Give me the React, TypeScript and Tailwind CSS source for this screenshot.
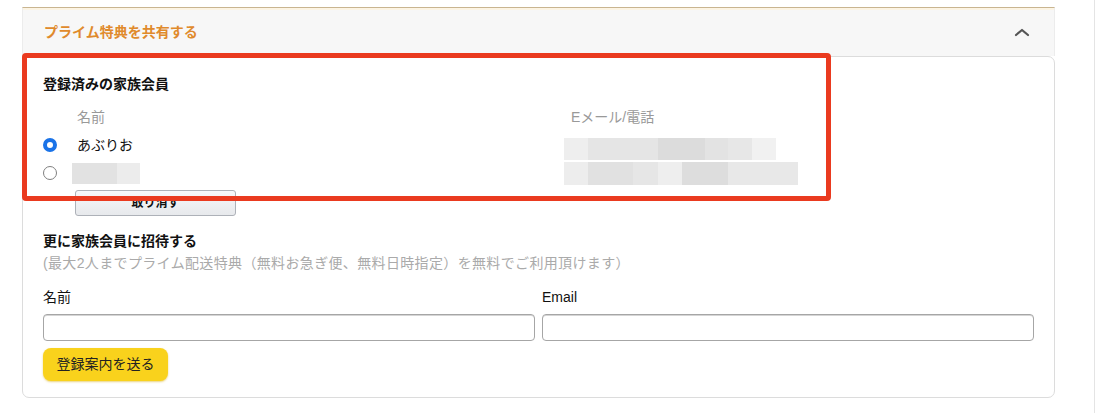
import React from "react";

const font = { fontFamily: '"Liberation Sans", "Noto Sans CJK JP", sans-serif' };

function Blocks({ segs, h }: { segs: [number, string][]; h: number }) {
  return (
    <div className="flex" style={{ height: h }}>
      {segs.map(([w, c], i) => (
        <div key={i} style={{ width: w, background: c }} />
      ))}
    </div>
  );
}

export default function App() {
  return (
    <div className="relative w-[1100px] h-[413px] bg-white flex overflow-hidden" style={font}>
      <div className="w-[1094px] pt-[7px] pl-[22px] pr-[39px]">
        <div className="h-[49px] border-t border-[#c9b590] bg-[#f7f7f7] shadow-[inset_0_2px_0_#fcf4e4] flex items-center justify-between pl-[21px] pr-[24px] border-x border-x-[#ececec]">
          <span className="text-[14px] font-bold text-[#e08a2c] leading-[20px]">プライム特典を共有する</span>
          <svg width="16" height="10" viewBox="0 0 16 10">
            <polyline points="2,8 8,3 14,8" fill="none" stroke="#555" strokeWidth="2.2" strokeLinecap="round" strokeLinejoin="round" />
          </svg>
        </div>
        <div className="border border-[#dcdcdc] rounded-[7px] px-[20px] pt-[17px] pb-[16px] text-[#111]">
          <div className="text-[14px] font-bold leading-[20px]">登録済みの家族会員</div>
          <div className="grid grid-cols-[521px_1fr] mt-[13px] text-[14px] leading-[20px]">
            <div className="pl-[34px] text-[#999]">名前</div>
            <div className="pl-[7px] text-[#999]">Eメール/電話</div>
          </div>
          <div className="grid grid-cols-[521px_1fr] mt-[4px] text-[14px]">
            <div className="flex flex-col">
              <div className="h-[28px] flex items-center">
                <div className="w-[14px] h-[14px] rounded-full border-[4px] border-[#1a73e8] bg-white" />
                <span className="ml-[20px] leading-[20px]">あぶりお</span>
              </div>
              <div className="h-[28px] flex items-center">
                <div className="w-[14px] h-[14px] rounded-full border-[1.5px] border-[#808080] bg-white" />
                <div className="ml-[15px]">
                  <Blocks h={21} segs={[[45, "#e2e2e2"], [23, "#ececec"]]} />
                </div>
              </div>
            </div>
            <div className="flex flex-col pt-[7px]">
              <Blocks h={22} segs={[[24, "#eeeeee"], [70, "#e5e5e5"], [47, "#dcdcdc"], [23, "#e3e3e3"], [24, "#e7e7e7"], [24, "#f1f1f1"]]} />
              <div className="h-[2px]" />
              <Blocks h={23} segs={[[24, "#ededed"], [45, "#e1e1e1"], [25, "#e6e6e6"], [24, "#eeeeee"], [46, "#dddddd"], [70, "#e8e8e8"]]} />
            </div>
          </div>
          <button className="mt-[3px] ml-[32px] w-[161px] h-[26px] rounded-[3px] border border-[#adb1b8] bg-gradient-to-b from-[#f7f8fa] to-[#e7e9ec] text-[12px] font-bold text-[#111] flex items-center justify-center">
            取り消す
          </button>
          <div className="mt-[15px] text-[14px] font-bold leading-[20px]">更に家族会員に招待する</div>
          <div className="mt-[2px] text-[14px] leading-[20px] text-[#aaa] tracking-[0.35px]">
            (最大2人までプライム配送特典（無料お急ぎ便、無料日時指定）を無料でご利用頂けます）
          </div>
          <div className="mt-[14px] grid grid-cols-2 gap-x-[7px] text-[14px] leading-[20px]">
            <div>名前</div>
            <div>Email</div>
            <div className="mt-[7px] h-[27px] border border-[#a6a6a6] rounded-[4px] shadow-[inset_0_1px_0_#d5d5d5]" />
            <div className="mt-[7px] h-[27px] border border-[#a6a6a6] rounded-[4px] shadow-[inset_0_1px_0_#d5d5d5]" />
          </div>
          <button className="mt-[7px] w-[125px] h-[33px] rounded-[8px] bg-[#f9d21c] shadow-[0_1px_2px_rgba(213,169,0,0.5)] text-[14px] text-[#222] flex items-center justify-center">
            登録案内を送る
          </button>
        </div>
      </div>
      <div className="flex-1 border-l border-[#e4e4e4]" />
      <div className="absolute left-[22px] top-[53px] w-[809px] h-[148px] border-[5px] border-[#ea3a1f] rounded-[4px] pointer-events-none" />
    </div>
  );
}
